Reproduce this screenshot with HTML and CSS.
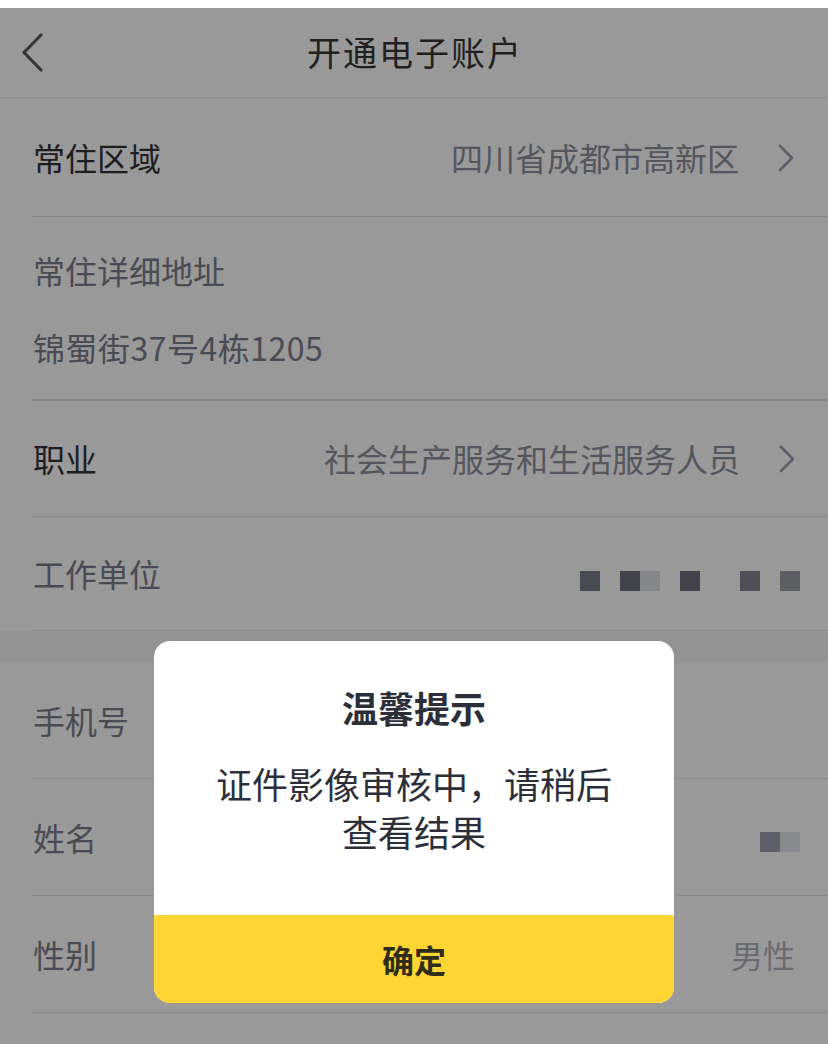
FILE: index.html
```html
<!DOCTYPE html>
<html lang="zh-CN">
<head>
<meta charset="utf-8">
<title>开通电子账户</title>
<link rel="stylesheet" href="styles.css">
</head>
<body>
<div class="statusbar"></div>
<div class="nav">
  <svg class="back" width="24" height="40" viewBox="0 0 24 40"><polyline points="20,3 3,20.5 20,38" fill="none" stroke="#5a5a5a" stroke-width="3.2" stroke-linecap="round" stroke-linejoin="round"/></svg>
  <div class="nav-title">开通电子账户</div>
</div>

<div class="list">
  <div class="row row-first">
    <span class="label dark">常住区域</span>
    <span class="value">四川省成都市高新区<svg class="arrow" width="16" height="28" viewBox="0 0 16 28"><polyline points="2,2 14,14 2,26" fill="none" stroke="#9d9fad" stroke-width="2.6" stroke-linecap="round" stroke-linejoin="round"/></svg></span>
  </div>
  <div class="row-block">
    <div class="label light">常住详细地址</div>
    <div class="addr">锦蜀街37号4栋1205</div>
  </div>
  <div class="row">
    <span class="label dark">职业</span>
    <span class="value">社会生产服务和生活服务人员<svg class="arrow" width="16" height="28" viewBox="0 0 16 28"><polyline points="2,2 14,14 2,26" fill="none" stroke="#9d9fad" stroke-width="2.6" stroke-linecap="round" stroke-linejoin="round"/></svg></span>
  </div>
  <div class="row row-mosaic row-work">
    <span class="label light">工作单位</span>
    <span class="mosaic">
      <i class="px c1"></i><i class="gap"></i><i class="px c2"></i><i class="px c3"></i><i class="gap"></i><i class="px c4"></i><i class="gap"></i><i class="gap"></i><i class="px c5"></i><i class="gap"></i><i class="px c6"></i>
    </span>
  </div>
</div>

<div class="band"></div>

<div class="list">
  <div class="row row-tall">
    <span class="label light">手机号</span>
  </div>
  <div class="row row-tall row-mosaic">
    <span class="label light">姓名</span>
    <span class="mosaic mosaic-name"><i class="px c7"></i><i class="px c8"></i></span>
  </div>
  <div class="row row-tall">
    <span class="label light">性别</span>
    <span class="value pale">男性</span>
  </div>
</div>

<div class="overlay">
  <div class="dialog">
    <div class="dialog-title">温馨提示</div>
    <div class="dialog-body">证件影像审核中，请稍后查看结果</div>
    <div class="dialog-btn">确定</div>
  </div>
</div>
</body>
</html>
```

FILE: styles.css
```css
* { box-sizing: border-box; }
html, body {
  margin: 0;
  padding: 0;
}
body {
  width: 828px;
  height: 1044px;
  overflow: hidden;
  background: #ffffff;
  font-family: "Noto Sans CJK SC", "Noto Sans", sans-serif;
  color: #333;
  position: relative;
}
.statusbar {
  height: 8px;
  background: #fff;
}
.nav {
  height: 91px;
  border-bottom: 2px solid #f0f0f0;
  display: flex;
  align-items: center;
  justify-content: center;
  position: relative;
}
.back {
  position: absolute;
  left: 21px;
  top: 24px;
}
.nav-title {
  font-size: 34px;
  color: #383838;
  letter-spacing: 2px;
  margin-top: -2px;
  margin-right: -2px;
}
.list {
  padding-left: 32px;
}
.row {
  height: 116px;
  border-bottom: 1px solid #e8e8e8;
  display: flex;
  align-items: center;
  justify-content: space-between;
  padding-left: 1px;
  padding-right: 33px;
}
.row-first {
  height: 118px;
  padding-right: 34px;
}
.row-work {
  height: 114px;
}
.row-tall {
  height: 117px;
}
.label {
  font-size: 32px;
  line-height: 45px;
}
.label.dark { color: #333338; }
.label.light { color: #7c7e8c; }
.value {
  font-size: 32px;
  line-height: 45px;
  color: #8e8f9d;
  display: flex;
  align-items: center;
}
.value.pale { color: #b1b2be; }
.arrow {
  margin-left: 39px;
}
.row-block {
  padding: 31px 0 30px 1px;
  border-bottom: 2px solid #e8e8e8;
  height: 184px;
}
.addr {
  margin-top: 32px;
  font-size: 32px;
  line-height: 45px;
  color: #7c7e8c;
  letter-spacing: 0.5px;
}
.row-mosaic {
  padding-right: 28px;
}
.mosaic {
  display: flex;
  align-items: center;
  margin-top: 14px;
}
.mosaic i {
  display: block;
  width: 20px;
  height: 20px;
}
.mosaic .c1 { background: #7b7d8c; }
.mosaic .c2 { background: #707182; }
.mosaic .c3 { background: #dedfe6; }
.mosaic .c4 { background: #6e7080; }
.mosaic .c5 { background: #828491; }
.mosaic .c6 { background: #9d9ea7; }
.mosaic-name {
  margin-top: 10px;
}
.mosaic .c7 { background: #9d9fb0; }
.mosaic .c8 { background: #e3e4e9; }
.band {
  height: 31px;
  background: #f5f5f5;
}
.overlay {
  position: absolute;
  left: 0;
  right: 0;
  top: 8px;
  bottom: 0;
  background: rgba(0, 0, 0, 0.4);
  display: flex;
  justify-content: center;
  align-items: flex-start;
  padding-top: 633px;
}
.dialog {
  width: 520px;
  height: 362px;
  background: #fff;
  border-radius: 16px;
  overflow: hidden;
  display: flex;
  flex-direction: column;
  align-items: center;
}
.dialog-title {
  margin-top: 41px;
  font-size: 36px;
  line-height: 50px;
  font-weight: 700;
  color: #2c2f3a;
}
.dialog-body {
  margin-top: 27px;
  width: 408px;
  font-size: 36px;
  line-height: 48px;
  color: #2c2f3a;
  text-align: center;
}
.dialog-btn {
  margin-top: auto;
  width: 100%;
  height: 88px;
  background: #fed533;
  display: flex;
  align-items: center;
  justify-content: center;
  font-size: 32px;
  font-weight: 700;
  color: #302c1c;
}
```
